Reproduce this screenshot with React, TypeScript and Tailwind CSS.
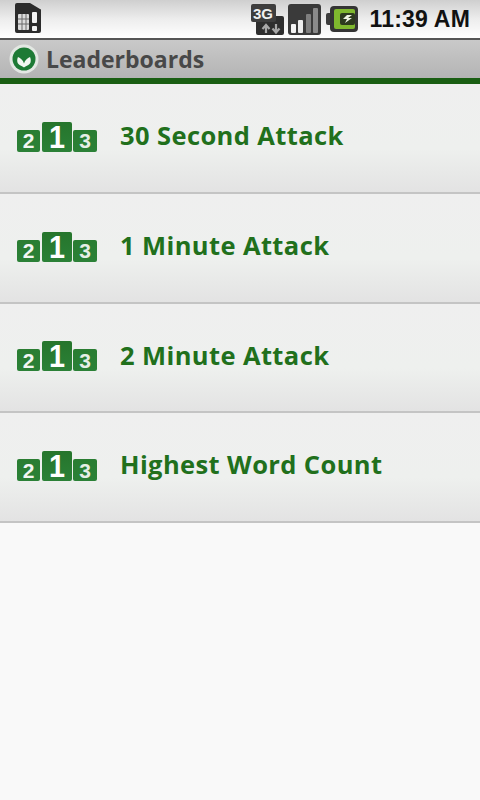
const rows = ["30 Second Attack", "1 Minute Attack", "2 Minute Attack", "Highest Word Count"];

const Podium = () => (
  <div className="flex items-end w-[80px] shrink-0 font-['Liberation_Sans',sans-serif] font-bold leading-none">
    <div className="w-[23px] h-[22px] rounded-[2px] bg-gradient-to-b from-[#2a7d32] to-[#2b8137] flex items-center justify-center text-[#f2f6f2] text-[21px]">2</div>
    <div className="ml-[2px] w-[30px] h-[30px] rounded-[2px] bg-gradient-to-b from-[#26752c] to-[#2b8137] flex items-center justify-center text-white text-[32px]">
      <span className="inline-block scale-x-90">1</span>
    </div>
    <div className="ml-[1px] w-[24px] h-[22px] rounded-[2px] bg-gradient-to-b from-[#2a7d32] to-[#2b8137] flex items-center justify-center text-[#e6eee6] text-[21px]">3</div>
  </div>
);

const SimIcon = () => (
  <svg width="26" height="30" viewBox="0 0 26 30" className="ml-[15px] mt-[-2px]">
    <path d="M2 0h13l10 6a1 1 0 0 1 1 1v21a2 2 0 0 1-2 2H2a2 2 0 0 1-2-2V2a2 2 0 0 1 2-2z" fill="#2c2c2c" />
    <rect x="3" y="11" width="11" height="16" rx="1" fill="#dcdcdc" />
    <path d="M7 11v16M11 11v16M3 16h11M3 21h11" stroke="#6b6b6b" strokeWidth="1" />
    <rect x="17" y="9" width="5" height="11" rx="1" fill="#f4f4f4" />
    <rect x="17" y="23" width="5" height="5" rx="1" fill="#f4f4f4" />
  </svg>
);

const NetIcon = () => (
  <svg width="33" height="31" viewBox="0 0 33 31">
    <rect x="5" y="12" width="28" height="19" rx="2" fill="#2e2e2e" />
    <rect x="0" y="0" width="25" height="18" rx="2" fill="#3e3e3e" />
    <path d="M15 29v-7M11.500 25l3.500-4 3.500 4M25 20v8M21.500 24.500l3.500 4 3.500-4" fill="none" stroke="#a8a8a8" strokeWidth="2.200" />
    <text x="2" y="15" fontFamily="'Liberation Sans', sans-serif" fontSize="15" fontWeight="700" fill="#f0f0f0">3G</text>
  </svg>
);

const SignalIcon = () => (
  <svg width="33" height="31" viewBox="0 0 33 31">
    <rect width="33" height="31" rx="3" fill="#3a3a3a" />
    <rect x="3" y="20" width="5" height="9" rx="1" fill="#f4f4f4" />
    <rect x="10" y="16" width="5" height="13" rx="1" fill="#ececec" />
    <rect x="18" y="10" width="5" height="19" rx="1" fill="#7e7e7e" />
    <rect x="25" y="4" width="5" height="25" rx="1" fill="#8a8a8a" />
  </svg>
);

const BatteryIcon = () => (
  <svg width="32" height="26" viewBox="0 0 32 26">
    <rect x="0" y="7" width="7" height="12" rx="2" fill="#3c3c3c" />
    <rect x="4" y="0" width="28" height="26" rx="4" fill="#343434" />
    <rect x="8" y="3" width="21" height="20" rx="2" fill="#7fb82e" />
    <rect x="14" y="7" width="15" height="12" rx="2" fill="#2d3a1e" />
    <path d="M26 9h-5l-4 4h4l-2 4 7-5h-4z" fill="#eef3e4" />
  </svg>
);

const Logo = () => (
  <svg width="30" height="30" viewBox="0 0 30 30" className="ml-[9px]">
    <circle cx="15" cy="15" r="14.500" fill="#e3e8e3" />
    <circle cx="15" cy="15" r="11.500" fill="#1d7a35" />
    <path d="M15 23.500c-1.500-1.500-5.500-2-6.500-5-.6-2-.2-4 .5-5.500 2.500 1 5.200 3.500 6 6.500.8-3 3.500-5.500 6-6.500.7 1.500 1.100 3.500.5 5.500-1 3-5 3.500-6.500 5z" fill="#f2f7f2" />
  </svg>
);

export default function App() {
  return (
    <div className="w-[480px] h-[800px] bg-[#f9f9f9] overflow-hidden font-['Open_Sans',sans-serif]">
      <div className="h-[38px] bg-gradient-to-b from-[#cfcfcf] via-[#ededed] to-[#ffffff] flex items-center">
        <SimIcon />
        <div className="ml-auto flex items-center">
          <NetIcon />
          <div className="ml-[4px]"><SignalIcon /></div>
          <div className="ml-[5px]"><BatteryIcon /></div>
          <span className="ml-[12px] mr-[10px] text-[23px] leading-none text-[#111] font-semibold font-['Liberation_Sans',sans-serif] tracking-[0.2px]">11:39 AM</span>
        </div>
      </div>
      <div className="h-[40px] border-t-2 border-[#555] bg-gradient-to-b from-[#c9c9c9] to-[#b4b4b4] flex items-center">
        <Logo />
        <span className="ml-[7px] text-[23px] font-bold text-[#484848] leading-none">Leaderboards</span>
      </div>
      <div className="h-[6px] bg-[#1a5e13]" />
      {rows.map((r) => (
        <div key={r} className="h-[109.750px] flex items-center pl-[17px] pb-[2px] border-b-2 border-[#c4c4c4] bg-gradient-to-b from-[#efefef] via-[#eef0ee] via-60% to-[#e3e3e3]">
          <Podium />
          <span className="ml-[23px] text-[25.500px] font-bold text-[#21701c] leading-none tracking-[0.4px] -mt-[2px]">{r}</span>
        </div>
      ))}
    </div>
  );
}
